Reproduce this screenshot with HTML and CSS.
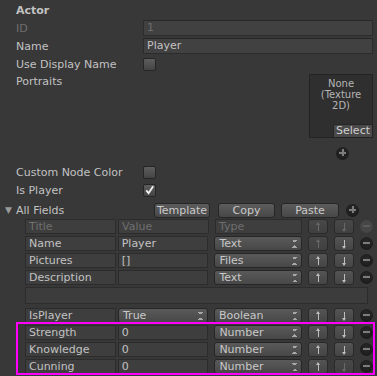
FILE: index.html
```html
<!DOCTYPE html>
<html lang="en">
<head>
  <meta charset="UTF-8" />
  <title>Actor Inspector</title>
  <link rel="stylesheet" href="styles.css">
</head>
<body>
  <div class="inspector">
    <div class="row title">Actor</div>
    <div class="row"><span class="label dim">ID</span><span class="field dim">1</span></div>
    <div class="row"><span class="label">Name</span><span class="field">Player</span></div>
    <div class="row"><span class="label">Use Display Name</span><span class="check"></span></div>

    <div class="portraits">
      <span class="label">Portraits</span>
      <div class="portrait-box">
        <div class="portrait-text">
          <div>None</div>
          <div>(Texture</div>
          <div>2D)</div>
        </div>
        <span class="select-btn">Select</span>
      </div>
    </div>
    <div class="row add-row"><span class="circle plus"></span></div>

    <div class="row gap4"><span class="label">Custom Node Color</span><span class="check"></span></div>
    <div class="row">
      <span class="label">Is Player</span>
      <span class="check">
        <svg width="12" height="12" viewBox="0 0 12 12"><path d="M2.5 6.5 L5 9.5 L10 2" fill="none" stroke="#f2f2f2" stroke-width="2"/></svg>
      </span>
    </div>

    <div class="row foldout gap4">
      <span class="arrow">&#9660;</span>
      <span class="fold-label">All Fields</span>
      <span class="btn w-template">Template</span>
      <span class="btn w-copy">Copy</span>
      <span class="btn w-paste">Paste</span>
      <span class="circle plus"></span>
    </div>

    <div class="table">
      <div class="trow">
        <span class="cell dim">Title</span>
        <span class="cell dim">Value</span>
        <span class="cell type dim">Type</span>
        <span class="move up off"></span>
        <span class="move down off"></span>
        <span class="circle minus off"></span>
      </div>
      <div class="trow">
        <span class="cell">Name</span>
        <span class="cell">Player</span>
        <span class="popup type">Text</span>
        <span class="move up off"></span>
        <span class="move down"></span>
        <span class="circle minus"></span>
      </div>
      <div class="trow">
        <span class="cell">Pictures</span>
        <span class="cell">[]</span>
        <span class="popup type">Files</span>
        <span class="move up"></span>
        <span class="move down"></span>
        <span class="circle minus"></span>
      </div>
      <div class="trow">
        <span class="cell">Description</span>
        <span class="cell"></span>
        <span class="popup type">Text</span>
        <span class="move up"></span>
        <span class="move down"></span>
        <span class="circle minus"></span>
      </div>
      <div class="wide-box"></div>
      <div class="trow">
        <span class="cell">IsPlayer</span>
        <span class="popup value">True</span>
        <span class="popup type">Boolean</span>
        <span class="move up"></span>
        <span class="move down"></span>
        <span class="circle minus"></span>
      </div>
      <div class="trow">
        <span class="cell">Strength</span>
        <span class="cell">0</span>
        <span class="popup type">Number</span>
        <span class="move up"></span>
        <span class="move down"></span>
        <span class="circle minus"></span>
      </div>
      <div class="trow">
        <span class="cell">Knowledge</span>
        <span class="cell">0</span>
        <span class="popup type">Number</span>
        <span class="move up"></span>
        <span class="move down"></span>
        <span class="circle minus"></span>
      </div>
      <div class="trow">
        <span class="cell">Cunning</span>
        <span class="cell">0</span>
        <span class="popup type">Number</span>
        <span class="move up"></span>
        <span class="move down off"></span>
        <span class="circle minus"></span>
      </div>
    </div>
  </div>

  <div class="highlight"></div>
</body>
</html>
```

FILE: styles.css
```css
body {
  margin: 0;
  background: #383838;
  font-family: "DejaVu Sans", Verdana, sans-serif;
  font-size: 11px;
  color: #c2c2c2;
}

.inspector {
  padding: 0 4px 0 16px;
}

.row {
  display: flex;
  align-items: center;
  height: 16px;
  margin-top: 2px;
}

.gap4 {
  margin-top: 4px;
}

.title {
  font-weight: bold;
}

.label {
  width: 127px;
  flex: none;
  white-space: nowrap;
}

.dim {
  color: #6e6e6e;
}

.field {
  flex: 1;
  height: 14px;
  line-height: 14px;
  padding: 0 3px;
  background: #414141;
  border: 1px solid #2c2c2c;
  border-top-color: #282828;
}

.check {
  width: 11px;
  height: 11px;
  border: 1px solid #262626;
  border-radius: 2px;
  background: linear-gradient(#5e5e5e, #444444);
  display: flex;
  align-items: center;
  justify-content: center;
}

/* portrait picker */
.portraits {
  display: flex;
  justify-content: space-between;
  margin-top: 2px;
  height: 64px;
}

.portraits .label {
  line-height: 16px;
}

.portrait-box {
  width: 62px;
  height: 62px;
  background: #2f2f2f;
  border: 1px solid #232323;
  display: flex;
  flex-direction: column;
  justify-content: space-between;
  align-items: flex-end;
}

.portrait-text {
  align-self: stretch;
  text-align: center;
  font-size: 10px;
  line-height: 11px;
  padding-top: 3px;
  color: #b4b4b4;
}

.select-btn {
  height: 12px;
  line-height: 12px;
  padding: 0 2px;
  background: #4a4a4a;
  border-left: 1px solid #262626;
  border-top: 1px solid #262626;
  color: #cfcfcf;
}

.add-row {
  justify-content: flex-end;
  margin-top: 8px;
  height: 14px;
  padding-right: 24px;
}

/* round add / remove buttons */
.circle {
  width: 13px;
  height: 13px;
  border-radius: 50%;
  background: radial-gradient(circle at 50% 40%, #2a2a2a, #161616);
  position: relative;
  flex: none;
}

.circle::before,
.plus::after {
  content: "";
  position: absolute;
  background: #7c7c7c;
  left: 3px;
  top: 5px;
  width: 7px;
  height: 2px;
}

.plus::after {
  left: 6px;
  top: 2px;
  width: 2px;
  height: 7px;
}

.circle.off {
  background: #464646;
}

.circle.off::before {
  background: #5a5a5a;
}

/* foldout header */
.foldout {
  margin-left: -13px;
}

.arrow {
  width: 13px;
  font-size: 9px;
  color: #9a9a9a;
  padding-left: 2px;
  box-sizing: border-box;
}

.fold-label {
  width: 138px;
}

.btn {
  height: 13px;
  line-height: 13px;
  text-align: center;
  border: 1px solid #262626;
  border-radius: 3px;
  background: linear-gradient(#5c5c5c, #474747);
  color: #cacaca;
  margin-right: 6px;
}

.w-template { width: 54px; margin-right: 8px; }
.w-copy { width: 55px; }
.w-paste { width: 56px; margin-right: 7px; }

/* fields table */
.table {
  margin-top: 1px;
  padding-left: 9px;
}

.trow {
  display: flex;
  align-items: center;
  height: 15px;
  margin-bottom: 2px;
}

.cell {
  width: 83px;
  height: 13px;
  line-height: 13px;
  padding: 0 3px;
  background: #3e3e3e;
  border: 1px solid #2c2c2c;
  margin-right: 2px;
  white-space: nowrap;
  overflow: hidden;
}

.type {
  width: 79px;
  margin-left: 4px;
  margin-right: 6px;
}

.popup {
  height: 13px;
  line-height: 13px;
  padding: 0 14px 0 4px;
  border: 1px solid #262626;
  border-radius: 3px;
  background: linear-gradient(#5a5a5a, #474747);
  color: #c8c8c8;
  position: relative;
}

.popup.type {
  width: 68px;
}

.popup.value {
  width: 70px;
  margin-right: 2px;
}

.popup::after {
  content: "";
  position: absolute;
  right: 4px;
  top: 3px;
  width: 5px;
  height: 8px;
  background:
    linear-gradient(to top right, transparent 50%, #a8a8a8 50%) left top / 3px 3px no-repeat,
    linear-gradient(to top left, transparent 50%, #a8a8a8 50%) right top / 2px 3px no-repeat,
    linear-gradient(to bottom right, transparent 50%, #a8a8a8 50%) left bottom / 3px 3px no-repeat,
    linear-gradient(to bottom left, transparent 50%, #a8a8a8 50%) right bottom / 2px 3px no-repeat;
}

/* up / down buttons with a thin drawn arrow */
.move {
  width: 18px;
  height: 13px;
  border: 1px solid #2a2a2a;
  border-radius: 3px;
  background: linear-gradient(#545454, #454545);
  color: #bdbdbd;
  margin-right: 6px;
  position: relative;
}

.move::before {
  content: "";
  position: absolute;
  left: 9px;
  top: 3px;
  width: 1px;
  height: 8px;
  background: currentColor;
}

.move::after {
  content: "";
  position: absolute;
  left: 7px;
  border-left: 2.5px solid transparent;
  border-right: 2.5px solid transparent;
}

.up::after {
  top: 2px;
  border-bottom: 3px solid currentColor;
}

.down::after {
  bottom: 1px;
  border-top: 3px solid currentColor;
}

.move.off {
  background: linear-gradient(#484848, #404040);
  color: #686868;
}

.wide-box {
  width: 341px;
  height: 15px;
  background: #3c3c3c;
  border: 1px solid #2c2c2c;
  margin-bottom: 4px;
}

/* selection marker drawn over the last rows */
.highlight {
  position: absolute;
  left: 16px;
  top: 322px;
  width: 355px;
  height: 49px;
  border: 2px solid #ff00ff;
}
```
